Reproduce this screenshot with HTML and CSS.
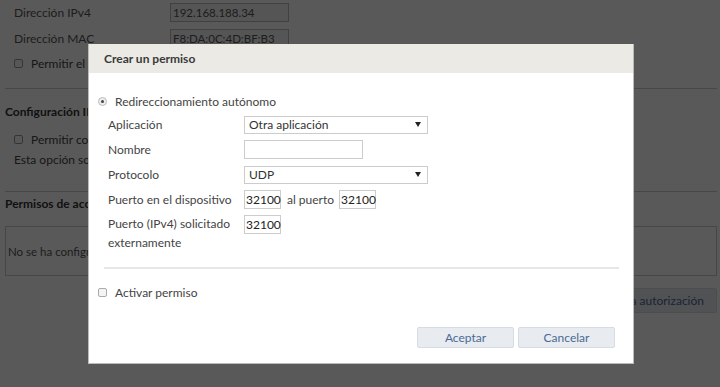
FILE: index.html
```html
<!DOCTYPE html>
<html lang="es">
<head>
<meta charset="utf-8">
<title>Crear un permiso</title>
<link rel="stylesheet" href="styles.css">
</head>
<body>
<div class="page">
  <div class="field"><span class="lbl">Dirección IPv4</span><span class="ro">192.168.188.34</span></div>
  <div class="field"><span class="lbl">Dirección MAC</span><span class="ro">F8:DA:0C:4D:BF:B3</span></div>
  <div class="check-row first"><span class="cb"></span><span class="clip c1">Permitir el reenvío de puertos</span></div>
  <hr class="sep">
  <h3 class="sec"><span class="clip c0">Configuración IPv6</span></h3>
  <div class="check-row"><span class="cb"></span><span class="clip c1">Permitir configuración</span></div>
  <p class="note"><span class="clip c2">Esta opción solo está disponible</span></p>
  <hr class="sep sep2">
  <h3 class="sec sec2"><span class="clip c0">Permisos de acceso</span></h3>
  <div class="empty"><span class="clip c3">No se ha configurado ningún permiso</span></div>
  <div class="actions-bg"><span class="btn-bg">Crear una autorización</span></div>
</div>

<div class="backdrop"></div>

<div class="dialog">
  <div class="dlg-head">Crear un permiso</div>
  <div class="dlg-body">
    <div class="radio-row"><span class="radio"></span><span>Redireccionamiento autónomo</span></div>
    <div class="form">
      <span class="flabel">Aplicación</span>
      <div class="select wide"><span>Otra aplicación</span><span class="arrow"></span></div>
      <span class="flabel">Nombre</span>
      <div class="input name"></div>
      <span class="flabel">Protocolo</span>
      <div class="select wide"><span>UDP</span><span class="arrow"></span></div>
      <span class="flabel">Puerto en el dispositivo</span>
      <div class="ports"><div class="input port">32100</div><span class="al">al puerto</span><div class="input port">32100</div></div>
      <span class="flabel two">Puerto (IPv4) solicitado externamente</span>
      <div class="top"><div class="input port">32100</div></div>
    </div>
    <hr class="dsep">
    <div class="check-row act"><span class="cb light"></span><span>Activar permiso</span></div>
    <div class="buttons">
      <button class="btn">Aceptar</button>
      <button class="btn">Cancelar</button>
    </div>
  </div>
</div>
</body>
</html>
```
FILE: styles.css
```css
* { box-sizing: border-box; }
html, body { margin: 0; padding: 0; }
body {
  width: 720px;
  height: 387px;
  overflow: hidden;
  background: #fff;
  font-family: "Lato", "Open Sans", sans-serif;
  font-size: 12px;
  color: #444;
  position: relative;
}
.page { padding: 3px 3px 0 5px; }
.field { display: flex; align-items: center; height: 19px; margin-bottom: 7px; }
.field .lbl { width: 165px; padding-left: 9px; color: #555; }
.ro {
  width: 119px; height: 19px; border: 1px solid #bbb; background: #f2f2f2;
  padding-left: 2px; line-height: 17px; color: #555; font-size: 11.5px;
}
.clip { display: inline-block; overflow: hidden; white-space: nowrap; vertical-align: top; }
.c0 { max-width: 83px; }
.c1 { max-width: 57px; }
.c2 { max-width: 74px; }
.c3 { max-width: 81px; }
.check-row { display: flex; align-items: center; gap: 8px; padding-left: 9px; height: 16px; }
.check-row.first { margin-top: 4px; }
.cb { width: 9px; height: 9px; border: 1px solid #999; border-radius: 2px; background: #fafafa; display: inline-block; flex: none; }
.sep { border: 0; border-top: 1px solid #ccc; margin: 17px 0 0 0; }
.sep.sep2 { margin-top: 23px; }
.sec { margin: 16px 0 12px 0; font-size: 12px; font-weight: 700; color: #333; line-height: 14px; }
.note { margin: 5px 0 0 0; padding-left: 9px; line-height: 16px; }
.sec.sec2 { margin: 5px 0 15px 0; }
.empty {
  height: 50px; border: 1px solid #ccc; display: flex; align-items: center;
  padding-left: 2px; color: #555; font-size: 11.5px;
}
.actions-bg { display: flex; justify-content: flex-end; margin-top: 12px; }
.btn-bg {
  height: 25px; padding: 0 12px; background: #e8ecf0; border: 1px solid #d8dde3;
  border-radius: 2px; display: flex; align-items: center; color: #4a6a95;
}

.backdrop { position: absolute; inset: 0; background: rgba(0,0,0,0.65); }

.dialog {
  position: absolute; left: 88px; top: 44px; width: 546px; height: 320px;
  background: #fff; border: 1px solid #bbb; border-top: 0;
}
.dlg-head {
  height: 29px; background: #ebeae4; padding-left: 15px;
  display: flex; align-items: center; font-weight: 700; color: #3a3a3a;
}
.dlg-body { padding: 0 18px 0 9px; }
.radio-row { display: flex; align-items: center; gap: 8px; margin-top: 21px; height: 14px; color: #444; }
.radio {
  width: 9px; height: 9px; border-radius: 50%; border: 1px solid #bbb; background: #eee;
  position: relative; display: inline-block;
}
.radio::after {
  content: ""; position: absolute; left: 2px; top: 2px; width: 3px; height: 3px;
  border-radius: 50%; background: #444;
}
.form {
  display: grid; grid-template-columns: 136px auto; row-gap: 6px;
  padding-left: 10px; margin-top: 7px; align-items: center; justify-items: start;
}
.flabel { color: #444; line-height: 19px; }
.flabel.two { width: 130px; align-self: start; line-height: 19px; margin-top: -1px; }
.top { align-self: start; }
.select {
  height: 18px; border: 1px solid #ccc; display: flex; align-items: center;
  justify-content: space-between; padding: 0 6px 0 4px; color: #333;
}
.select.wide { width: 184px; }
.arrow {
  width: 0; height: 0; border-left: 3px solid transparent; border-right: 3px solid transparent;
  border-top: 5px solid #222;
}
.input {
  height: 19px; border: 1px solid #ccc; padding-left: 1px; line-height: 17px; color: #222;
}
.input.name { width: 119px; }
.input.port { width: 37px; }
.ports { display: flex; align-items: center; }
.al { margin: 0 5px 0 6px; }
.dsep { border: 0; border-top: 2px solid #e6e6e6; margin: 15px 0 0 6px; width: 515px; }
.act { padding-left: 0; margin-top: 15px; gap: 8px; }
.cb.light { border-color: #aaa; background: #f4f4f4; }
.buttons { display: flex; justify-content: flex-end; gap: 4px; margin-top: 27px; }
.btn {
  width: 97px; height: 21px; background: #e8ecf0; border: 1px solid #d6dce3; border-radius: 2px;
  color: #4a6a95; font-family: inherit; font-size: 12px; padding: 0;
}
```
